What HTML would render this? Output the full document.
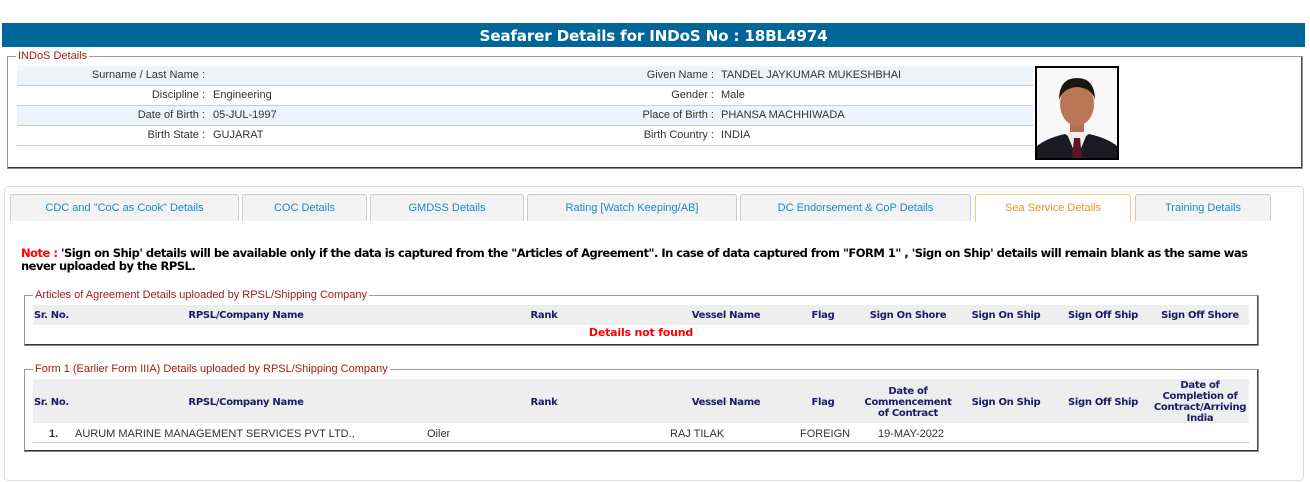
<!DOCTYPE html>
<html><head><meta charset="utf-8"><style>
*{margin:0;padding:0;box-sizing:border-box}
body{width:1310px;height:482px;background:#fff;position:relative;overflow:hidden;font-family:"Liberation Sans",Arial,sans-serif;font-size:11px;color:#333}
.a{position:absolute;white-space:nowrap}
.hdr{left:2px;top:23px;width:1303px;height:24px;background:#006699;color:#fff;font-weight:bold;font-size:15.2px;text-align:center;line-height:26px;font-family:"DejaVu Sans",sans-serif;letter-spacing:-0.2px}
.fs{position:absolute;border:2px groove #ddd;border-color:#999 #999 #888 #999;border-width:1px 2px 2px 1px}
.leg{position:absolute;background:#fff;color:#a01c1c;font-size:11px;padding:0 2px;line-height:12px}
.row{position:absolute;left:17px;width:1016px;height:20px;border-bottom:1px solid #ccc}
.lab{position:absolute;text-align:right;line-height:19px}
.val{position:absolute;line-height:19px}
.tab{position:absolute;top:194px;height:27px;background:#f3f3f3;border:1px solid #ccc;border-bottom:none;border-radius:3px 3px 0 0;color:#1a8ac8;text-align:center;line-height:26px;font-size:11px}
.th{position:absolute;color:#1a1a66;font-weight:bold;font-size:10px;font-family:"DejaVu Sans",Tahoma,sans-serif;text-align:center;line-height:11px;letter-spacing:-0.3px}
</style></head><body>
<div class="a hdr">Seafarer Details for INDoS No : 18BL4974</div>

<div class="fs" style="left:7px;top:56px;width:1296px;height:113px"></div>
<div class="leg" style="left:16px;top:50px">INDoS Details</div>

<div class="row" style="top:66px;background:#eef4fb"></div>
<div class="row" style="top:86px"></div>
<div class="row" style="top:106px;background:#eef4fb"></div>
<div class="row" style="top:126px"></div>

<div class="lab a" style="right:1105px;top:66px">Surname / Last Name :</div>
<div class="lab a" style="right:1105px;top:86px">Discipline :</div>
<div class="val a" style="left:213px;top:86px">Engineering</div>
<div class="lab a" style="right:1105px;top:106px">Date of Birth :</div>
<div class="val a" style="left:213px;top:106px">05-JUL-1997</div>
<div class="lab a" style="right:1105px;top:126px">Birth State :</div>
<div class="val a" style="left:213px;top:126px">GUJARAT</div>

<div class="lab a" style="right:596px;top:66px">Given Name :</div>
<div class="val a" style="left:721px;top:66px">TANDEL JAYKUMAR MUKESHBHAI</div>
<div class="lab a" style="right:596px;top:86px">Gender :</div>
<div class="val a" style="left:721px;top:86px">Male</div>
<div class="lab a" style="right:596px;top:106px">Place of Birth :</div>
<div class="val a" style="left:721px;top:106px">PHANSA MACHHIWADA</div>
<div class="lab a" style="right:596px;top:126px">Birth Country :</div>
<div class="val a" style="left:721px;top:126px">INDIA</div>

<div class="a" style="left:1035px;top:66px;width:84px;height:94px;border:2px solid #000;background:#fff;overflow:hidden">
<svg width="80" height="90" viewBox="0 0 80 90">
<rect width="80" height="90" fill="#f8f8f8"/>
<path d="M0 90 L0 78 Q10 70 28 66 L40 74 L52 66 Q70 70 80 78 L80 90Z" fill="#1a1a22"/>
<path d="M30 66 L40 90 L50 66 L46 62 L34 62Z" fill="#eee"/>
<path d="M37 70 L43 70 L45 90 L35 90Z" fill="#5a1525"/>
<rect x="33" y="50" width="14" height="14" fill="#b07050"/>
<ellipse cx="40" cy="36" rx="17" ry="22" fill="#b87858"/>
<path d="M22 32 Q22 10 40 10 Q58 10 58 32 Q55 20 40 19 Q26 20 22 32Z" fill="#1c1410"/>
</svg></div>

<div class="a" style="left:4px;top:186px;width:1300px;height:295px;border:1px solid #ddd;border-radius:4px"></div>
<div class="tab" style="left:10px;width:229px">CDC and "CoC as Cook" Details</div>
<div class="tab" style="left:242px;width:125px">COC Details</div>
<div class="tab" style="left:370px;width:154px">GMDSS Details</div>
<div class="tab" style="left:527px;width:210px">Rating [Watch Keeping/AB]</div>
<div class="tab" style="left:740px;width:231px">DC Endorsement &amp; CoP Details</div>
<div class="tab" style="left:975px;width:156px;background:#fff;border-color:#f5d27a;color:#f0902c;height:28px">Sea Service Details</div>
<div class="tab" style="left:1135px;width:136px">Training Details</div>

<div class="a" style="left:21px;top:247px;font-weight:bold;line-height:13px;color:#000;font-family:'DejaVu Sans',sans-serif;letter-spacing:-0.5px;font-size:11.5px"><span style="color:#f00">Note : </span>'Sign on Ship' details will be available only if the data is captured from the "Articles of Agreement". In case of data captured from "FORM 1" , 'Sign on Ship' details will remain blank as the same was<br>never uploaded by the RPSL.</div>

<div class="fs" style="left:24px;top:295px;width:1235px;height:51px"></div>
<div class="leg" style="left:33px;top:289px">Articles of Agreement Details uploaded by RPSL/Shipping Company</div>
<div class="a" style="left:33px;top:305px;width:1216px;height:20px;background:#eee"></div>
<div class="th" style="left:34px;top:310px">Sr. No.</div>
<div class="th" style="left:146px;width:200px;top:310px">RPSL/Company Name</div>
<div class="th" style="left:504px;width:80px;top:310px">Rank</div>
<div class="th" style="left:676px;width:100px;top:310px">Vessel Name</div>
<div class="th" style="left:793px;width:60px;top:310px">Flag</div>
<div class="th" style="left:858px;width:100px;top:310px">Sign On Shore</div>
<div class="th" style="left:956px;width:100px;top:310px">Sign On Ship</div>
<div class="th" style="left:1053px;width:100px;top:310px">Sign Off Ship</div>
<div class="th" style="left:1150px;width:100px;top:310px">Sign Off Shore</div>
<div class="a" style="left:541px;width:200px;top:326px;text-align:center;color:#f00;font-weight:bold;font-size:11px;font-family:'DejaVu Sans',sans-serif;letter-spacing:-0.2px">Details not found</div>

<div class="fs" style="left:24px;top:369px;width:1235px;height:83px"></div>
<div class="leg" style="left:33px;top:363px">Form 1 (Earlier Form IIIA) Details uploaded by RPSL/Shipping Company</div>
<div class="a" style="left:33px;top:379px;width:1216px;height:44px;background:#eee"></div>
<div class="th" style="left:34px;top:397px">Sr. No.</div>
<div class="th" style="left:146px;width:200px;top:397px">RPSL/Company Name</div>
<div class="th" style="left:504px;width:80px;top:397px">Rank</div>
<div class="th" style="left:676px;width:100px;top:397px">Vessel Name</div>
<div class="th" style="left:793px;width:60px;top:397px">Flag</div>
<div class="th" style="left:858px;width:100px;top:386px">Date of<br>Commencement<br>of Contract</div>
<div class="th" style="left:956px;width:100px;top:397px">Sign On Ship</div>
<div class="th" style="left:1053px;width:100px;top:397px">Sign Off Ship</div>
<div class="th" style="left:1150px;width:100px;top:380px">Date of<br>Completion of<br>Contract/Arriving<br>India</div>
<div class="a" style="left:33px;top:442px;width:1216px;height:1px;background:#ccc"></div>
<div class="a" style="left:49px;top:428px;font-weight:bold">1.</div>
<div class="a" style="left:75px;top:428px">AURUM MARINE MANAGEMENT SERVICES PVT LTD.,</div>
<div class="a" style="left:427px;top:428px">Oiler</div>
<div class="a" style="left:670px;top:428px">RAJ TILAK</div>
<div class="a" style="left:800px;top:428px">FOREIGN</div>
<div class="a" style="left:878px;top:428px">19-MAY-2022</div>
</body></html>
